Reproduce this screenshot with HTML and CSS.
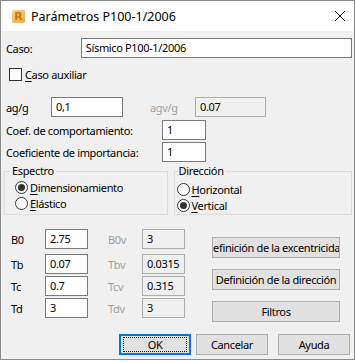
FILE: index.html
```html
<!DOCTYPE html>
<html lang="es">
<head>
    <meta charset="UTF-8">
    <title>Parámetros P100-1/2006</title>
    <link rel="stylesheet" href="styles.css">
</head>
<body>

<div class="window">
    <div class="titlebar">
        <span class="app-icon">R</span>
        <span class="title">Parámetros P100-1/2006</span>
        <svg class="close" width="12" height="12" viewBox="0 0 12 12">
            <path d="M1 1 L11 11 M11 1 L1 11" stroke="#111" stroke-width="1" fill="none"/>
        </svg>
    </div>

    <div class="content">
        <div class="row row-caso">
            <span class="lbl lbl-caso">Caso:</span>
            <div class="field field-caso">Sísmico P100-1/2006</div>
        </div>

        <div class="row row-check">
            <span class="checkbox"></span>
            <span class="lbl"><u>C</u>aso auxiliar</span>
        </div>

        <div class="row row-ag">
            <span class="lbl lbl-ag">ag/g</span>
            <div class="field field-ag">0,1</div>
            <span class="lbl lbl-gray lbl-agv">agv/g</span>
            <div class="field field-off field-agv">0.07</div>
        </div>

        <div class="row row-coef">
            <span class="lbl lbl-coef">Coef. de comportamiento:</span>
            <div class="field field-small">1</div>
        </div>

        <div class="row row-imp">
            <span class="lbl lbl-coef">Coeficiente de importancia:</span>
            <div class="field field-small">1</div>
        </div>

        <div class="groups">
            <fieldset class="group group-espectro">
                <legend>Espectro</legend>
                <div class="radio-row first"><span class="radio checked"></span><span><u>D</u>imensionamiento</span></div>
                <div class="radio-row"><span class="radio"></span><span><u>E</u>lástico</span></div>
            </fieldset>
            <fieldset class="group group-direccion">
                <legend>Dirección</legend>
                <div class="radio-row first"><span class="radio"></span><span><u>H</u>orizontal</span></div>
                <div class="radio-row"><span class="radio checked"></span><span><u>V</u>ertical</span></div>
            </fieldset>
        </div>

        <div class="params">
            <div class="param-grid">
                <div class="param-row">
                    <span class="lbl lbl-param">B0</span>
                    <div class="field field-param">2.75</div>
                    <span class="lbl lbl-gray lbl-paramv">B0v</span>
                    <div class="field field-off field-param">3</div>
                </div>
                <div class="param-row">
                    <span class="lbl lbl-param">Tb</span>
                    <div class="field field-param">0.07</div>
                    <span class="lbl lbl-gray lbl-paramv">Tbv</span>
                    <div class="field field-off field-param">0.0315</div>
                </div>
                <div class="param-row">
                    <span class="lbl lbl-param">Tc</span>
                    <div class="field field-param">0.7</div>
                    <span class="lbl lbl-gray lbl-paramv">Tcv</span>
                    <div class="field field-off field-param">0.315</div>
                </div>
                <div class="param-row">
                    <span class="lbl lbl-param">Td</span>
                    <div class="field field-param">3</div>
                    <span class="lbl lbl-gray lbl-paramv">Tdv</span>
                    <div class="field field-off field-param">3</div>
                </div>
            </div>

            <div class="side-buttons">
                <div class="btn btn-side"><span>Definición de la excentricidad</span></div>
                <div class="btn btn-side">Definición de la dirección</div>
                <div class="btn btn-side">Filtros</div>
            </div>
        </div>

        <div class="footer">
            <div class="btn btn-foot btn-default"><span class="focus">OK</span></div>
            <div class="btn btn-foot btn-cancel">Cancelar</div>
            <div class="btn btn-foot btn-help">Ayuda</div>
        </div>
    </div>
</div>

</body>
</html>
```

FILE: styles.css
```css
body {
    margin: 0;
    padding: 0;
    background-color: #ffffff;
    font-family: 'Noto Sans', 'DejaVu Sans', sans-serif;
    font-size: 11px;
    letter-spacing: -0.35px;
    color: #000000;
}

.window {
    box-sizing: border-box;
    width: 355px;
    height: 360px;
    border: 1px solid #8a8a8a;
    background: #f0f0f0;
}

.titlebar {
    height: 30px;
    background: #ffffff;
    display: flex;
    align-items: center;
    padding-left: 11px;
}

.app-icon {
    width: 13px;
    height: 13px;
    border-radius: 2px;
    background: linear-gradient(135deg, #fbd38a, #f0a83a);
    color: #c67a10;
    font-family: 'DejaVu Sans', sans-serif;
    font-weight: bold;
    font-size: 11px;
    letter-spacing: 0;
    line-height: 13px;
    text-align: center;
}

.title {
    margin-left: 6px;
    font-size: 12.5px;
    letter-spacing: 0;
}

.close {
    margin-left: auto;
    margin-right: 8px;
}

.content {
    padding: 0 2px 0 5px;
}

.row {
    display: flex;
    align-items: center;
}

.lbl {
    white-space: nowrap;
}

.lbl-gray {
    color: #a0a0a0;
}

u {
    text-decoration-thickness: 1px;
    text-underline-offset: 2px;
}

.field {
    box-sizing: border-box;
    height: 20px;
    border: 1px solid #7a7a7a;
    background: #ffffff;
    padding-left: 4px;
    line-height: 18px;
    white-space: nowrap;
    overflow: hidden;
}

.field-off {
    background: #f0f0f0;
    border-color: #adadad;
}

.row-caso {
    margin-top: 7px;
}

.lbl-caso {
    width: 75px;
}

.field-caso {
    width: 272px;
}

.row-check {
    margin-top: 10px;
    height: 13px;
    padding-left: 3px;
}

.checkbox {
    box-sizing: border-box;
    width: 13px;
    height: 13px;
    border: 1px solid #333;
    background: #fff;
    margin-right: 3px;
}

.row-ag {
    margin-top: 16px;
}

.lbl-ag {
    width: 45px;
}

.field-ag {
    width: 72px;
}

.lbl-agv {
    margin-left: 27px;
    width: 45px;
}

.field-agv {
    width: 71px;
}

.row-coef {
    margin-top: 3px;
}

.row-imp {
    margin-top: 2px;
}

.lbl-coef {
    width: 156px;
}

.field-small {
    width: 44px;
}

.groups {
    display: flex;
    margin-top: 2px;
}

.group {
    margin: 0;
    padding: 0 0 3px 0;
    border: 1px solid #dcdcdc;
    height: 51px;
    box-sizing: border-box;
}

.group legend {
    padding: 0 2px;
    line-height: 14px;
}

.group-espectro {
    margin-left: -2px;
    width: 164px;
}

.group-espectro legend {
    margin-left: 5px;
}

.group-espectro .radio-row {
    padding-left: 10px;
}

.group-espectro .radio-row.first {
    margin-top: 1px;
}

.group-direccion {
    margin-left: 6px;
    width: 179px;
}

.group-direccion legend {
    margin-left: 2px;
}

.group-direccion .radio-row {
    padding-left: 2px;
}

.group-direccion .radio-row.first {
    margin-top: 3px;
}

.radio-row {
    display: flex;
    align-items: center;
    height: 16px;
}

.radio {
    box-sizing: border-box;
    width: 13px;
    height: 13px;
    border: 1px solid #333;
    border-radius: 50%;
    background: #fff;
    margin-right: 2px;
    display: flex;
    align-items: center;
    justify-content: center;
}

.radio.checked::after {
    content: "";
    width: 7px;
    height: 7px;
    border-radius: 50%;
    background: #333;
}

.params {
    display: flex;
    margin-top: 14px;
}

.param-grid {
    display: flex;
    flex-direction: column;
    gap: 2px;
    padding-left: 5px;
}

.param-row {
    display: flex;
    align-items: center;
}

.param-row:nth-child(2) {
    margin-top: 3px;
}

.lbl-param {
    width: 34px;
}

.field-param {
    width: 43px;
}

.lbl-paramv {
    margin-left: 20px;
    width: 34px;
}

.side-buttons {
    display: flex;
    flex-direction: column;
    margin-left: 27px;
    padding-top: 8px;
    gap: 11px;
}

.btn {
    box-sizing: border-box;
    height: 21px;
    border: 1px solid #adadad;
    background: #e1e1e1;
    display: flex;
    align-items: center;
    justify-content: center;
    white-space: nowrap;
    overflow: hidden;
}

.btn-side {
    width: 128px;
}

.footer {
    display: flex;
    margin-top: 12px;
    padding-left: 113px;
}

.btn-foot {
    width: 72px;
}

.btn-default {
    border: 2px solid #0078d7;
}

.btn-default .focus {
    box-sizing: border-box;
    width: 64px;
    height: 15px;
    border: 1px dotted #000;
    display: flex;
    align-items: center;
    justify-content: center;
}

.btn-cancel {
    margin-left: 5px;
}

.btn-help {
    margin-left: 10px;
}
```
